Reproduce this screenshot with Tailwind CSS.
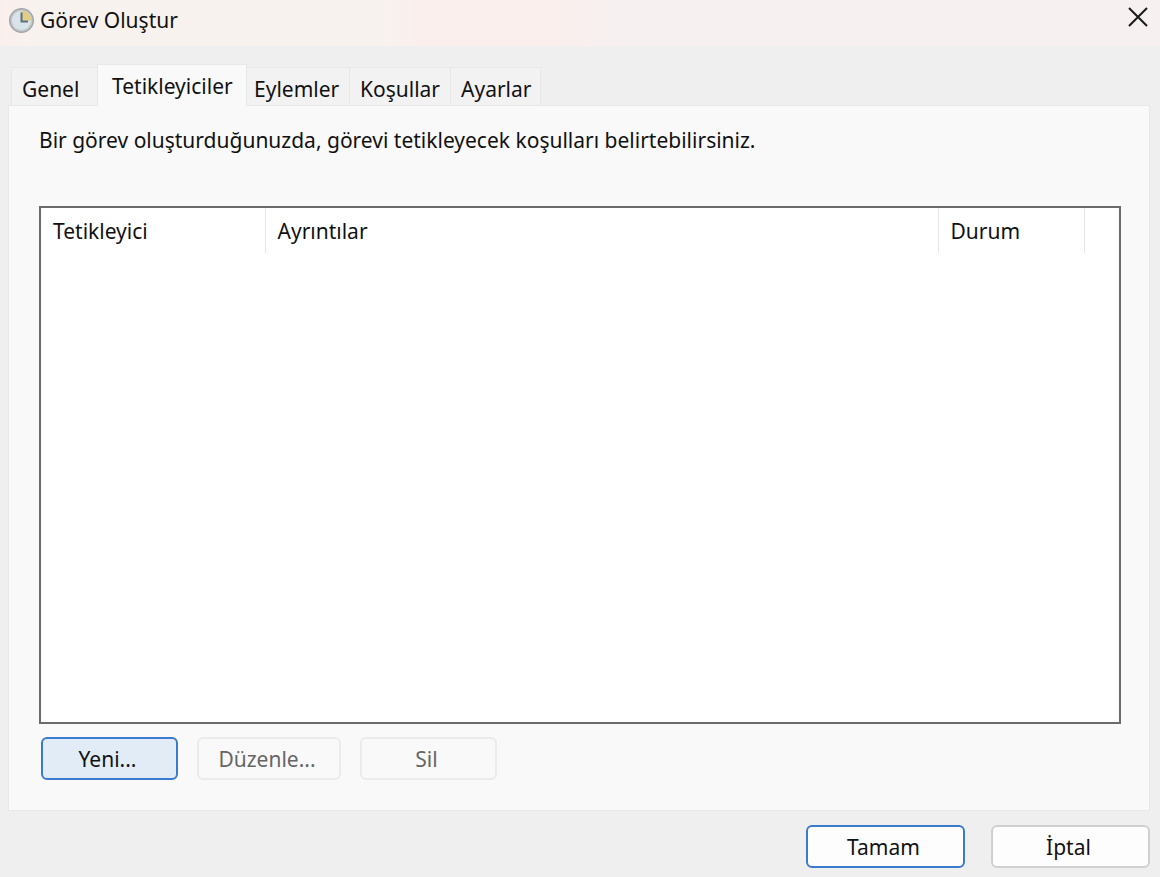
<!DOCTYPE html>
<html lang="tr">
<head>
  <meta charset="UTF-8" />
  <meta name="viewport" content="width=device-width, initial-scale=1.0" />
  <title>Görev Oluştur</title>
  <script src="https://cdn.jsdelivr.net/npm/@tailwindcss/browser@4"></script>
</head>
<body class="min-h-screen flex flex-col bg-[#efefef] font-['Noto_Sans','Open_Sans',sans-serif] text-[21px] leading-7 text-[#111111]">

<!-- Başlık -->
<header class="flex h-[46px] items-start justify-between bg-[linear-gradient(to_right,#faefed_0%,#f8f2ee_3%,#f8f2ee_33%,#faefed_36%,#faefed_48%,#f6f0f0_54%,#f6f0f0_100%)] pl-2 pr-3 pt-[6px]">
  <div class="flex items-center gap-1">
    <svg class="size-7" viewBox="0 0 28 28" aria-hidden="true">
      <circle cx="13.500" cy="14.500" r="12.500" fill="#a3a6a9" />
      <circle cx="13.500" cy="14.500" r="11" fill="#c4c9cc" />
      <circle cx="13.500" cy="14.500" r="9.500" fill="#d9e4ea" />
      <path d="M13.500 14.500V4.500a10 10 0 0 1 10 10z" fill="#e3cd86" />
      <path d="M13.500 6.500v9h6.500" fill="none" stroke="#5d6f7d" stroke-width="2" />
    </svg>
    <h1>Görev Oluştur</h1>
  </div>
  <button type="button" aria-label="Kapat" class="flex h-[22px] w-5 items-center justify-center">
    <svg class="h-5 w-5" viewBox="0 0 20 20" fill="none" stroke="#1a1a1a" stroke-width="2"><path d="M1 1l18 18M19 1L1 19" /></svg>
  </button>
</header>

<main class="flex flex-1 flex-col pl-2 pr-[10px] pt-[18px] pb-[9px]">
  <!-- Sekmeler -->
  <div role="tablist" class="flex items-end pl-[3px]">
    <button type="button" role="tab" class="h-[38px] w-[86px] border border-r-0 border-b-0 border-[#e8e8e8] bg-[#f2f2f2] pl-[10px] pt-1 text-left">Genel</button>
    <button type="button" role="tab" aria-selected="true" class="z-10 -mb-px h-[42px] w-[150px] border border-b-0 border-[#e8e8e8] bg-[#f9f9f9] pl-[14px] text-left">Tetikleyiciler</button>
    <button type="button" role="tab" class="h-[38px] w-[103px] border border-l-0 border-b-0 border-[#e8e8e8] bg-[#f2f2f2] pl-[7px] pt-1 text-left">Eylemler</button>
    <button type="button" role="tab" class="h-[38px] w-[101px] border border-l-0 border-b-0 border-[#e8e8e8] bg-[#f2f2f2] pl-[10px] pt-1 text-left">Koşullar</button>
    <button type="button" role="tab" class="h-[38px] w-[90px] border border-l-0 border-b-0 border-[#e8e8e8] bg-[#f2f2f2] pl-[10px] pt-1 text-left">Ayarlar</button>
  </div>

  <section role="tabpanel" class="flex flex-1 flex-col border border-[#e8e8e8] bg-[#f9f9f9] pl-[30px] pr-7 pt-5 pb-[30px]">
    <p>Bir görev oluşturduğunuzda, görevi tetikleyecek koşulları belirtebilirsiniz.</p>

    <!-- Liste -->
    <div class="mt-[52px] flex-1 border-2 border-[#6b6b6b] bg-white">
      <table class="w-full table-fixed">
        <thead>
          <tr class="h-[45px] text-left">
            <th class="w-[224px] border-r border-[#e5e5e5] pl-3 font-normal">Tetikleyici</th>
            <th class="border-r border-[#e5e5e5] pl-3 font-normal">Ayrıntılar</th>
            <th class="w-[146px] border-r border-[#e5e5e5] pl-3 font-normal">Durum</th>
            <td class="w-[35px]"></td>
          </tr>
        </thead>
        <tbody></tbody>
      </table>
    </div>

    <div class="mt-[13px] flex gap-[19px] pl-[2px]">
      <button type="button" class="h-[43px] w-[137px] rounded-md border-2 border-[#3a7bd0] bg-[#e1ecf7] pr-1">Yeni...</button>
      <button type="button" disabled class="h-[43px] w-[144px] rounded-md border-2 border-[#ebebeb] pr-1 text-[#666666]">Düzenle...</button>
      <button type="button" disabled class="h-[43px] w-[137px] rounded-md border-2 border-[#ebebeb] pr-1 text-[#666666]">Sil</button>
    </div>
  </section>

  <div class="mt-[14px] flex justify-end gap-[26px]">
    <button type="button" class="h-[43px] w-[159px] rounded-md border-2 border-[#3a7bd0] bg-[#fdfdfd] pr-1">Tamam</button>
    <button type="button" class="h-[43px] w-[159px] rounded-md border-2 border-[#d0d0d0] bg-[#fdfdfd] pr-1">İptal</button>
  </div>
</main>

</body>
</html>
